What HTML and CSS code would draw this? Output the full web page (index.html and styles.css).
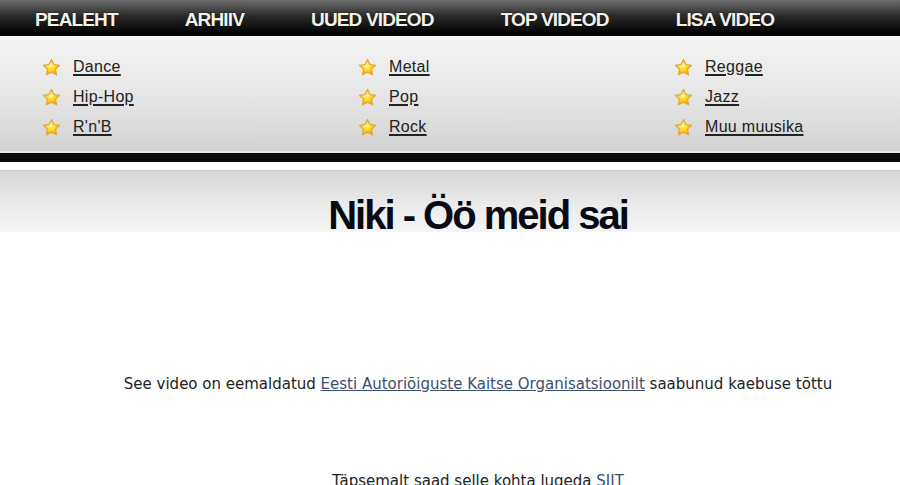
FILE: index.html
```html
<!DOCTYPE html>
<html lang="et">
<head>
  <meta charset="UTF-8" />
  <title>Niki - Öö meid sai</title>
  <link rel="stylesheet" href="styles.css">
</head>
<body>
  <!-- Ülemine menüü -->
  <nav class="topnav">
    <a href="#">PEALEHT</a>
    <a href="#">ARHIIV</a>
    <a href="#">UUED VIDEOD</a>
    <a href="#">TOP VIDEOD</a>
    <a href="#">LISA VIDEO</a>
  </nav>

  <!-- Žanrid -->
  <div class="genres">
    <ul class="genre-col">
      <li><span class="star"></span><a href="#">Dance</a></li>
      <li><span class="star"></span><a href="#">Hip-Hop</a></li>
      <li><span class="star"></span><a href="#">R'n'B</a></li>
    </ul>
    <ul class="genre-col">
      <li><span class="star"></span><a href="#">Metal</a></li>
      <li><span class="star"></span><a href="#">Pop</a></li>
      <li><span class="star"></span><a href="#">Rock</a></li>
    </ul>
    <ul class="genre-col">
      <li><span class="star"></span><a href="#">Reggae</a></li>
      <li><span class="star"></span><a href="#">Jazz</a></li>
      <li><span class="star"></span><a href="#">Muu muusika</a></li>
    </ul>
  </div>
  <div class="black-band"></div>

  <!-- Video pealkiri -->
  <div class="title-band">
    <h1>Niki - Öö meid sai</h1>
  </div>

  <div class="content">
    <p class="notice">See video on eemaldatud <a href="#">Eesti Autoriõiguste Kaitse Organisatsioonilt</a> saabunud kaebuse tõttu</p>
    <p class="more">Täpsemalt saad selle kohta lugeda <a href="#">SIIT</a></p>
  </div>

  <svg width="0" height="0" class="defs">
    <defs>
      <radialGradient id="starfill" cx="45%" cy="40%" r="65%">
        <stop offset="0" stop-color="#fff6a0"/>
        <stop offset="0.5" stop-color="#ffd21a"/>
        <stop offset="1" stop-color="#f0a000"/>
      </radialGradient>
    </defs>
  </svg>

  <script>
    // tähed lisatakse skriptiga, et HTML jääks lühikeseks
    var starSvg = '<svg viewBox="0 0 20 20" width="19" height="19"><path d="M10 1.5l2.6 5.4 5.9.8-4.3 4.1 1.1 5.9L10 14.9l-5.3 2.8 1.1-5.9L1.5 7.7l5.9-.8z" fill="url(#starfill)" stroke="#e2a33a" stroke-width="1.2" stroke-linejoin="round"/></svg>';
    document.querySelectorAll('.star').forEach(function (el) {
      el.innerHTML = starSvg;
    });
  </script>
</body>
</html>
```

FILE: styles.css
```css
/* Üldine */
* {
  box-sizing: border-box;
  margin: 0;
  padding: 0;
}

body {
  background: #fff;
  font-family: 'Liberation Sans', Arial, sans-serif;
  color: #222;
  width: 900px;
  height: 485px;
  overflow: hidden;
}

/* Ülemine menüü */
.topnav {
  height: 38px;
  display: flex;
  align-items: center;
  gap: 67px;
  padding-left: 35px;
  padding-top: 3px;
  background: linear-gradient(to bottom, #6e6e6e 0%, #2a2a2a 45%, #000 95%);
  border-bottom: 2px solid #f4f4f4;
}

.topnav a {
  color: #f2f1ea;
  text-decoration: none;
  font-weight: bold;
  font-size: 19px;
  letter-spacing: -0.85px;
  text-shadow: 0 0 2px rgba(0, 0, 0, 0.6);
}

/* Žanrid */
.genres {
  display: flex;
  padding: 14px 0 8px 42px;
  height: 113px;
  background: linear-gradient(to bottom, #f3f3f3 0%, #e6e6e6 50%, #d3d3d3 100%);
}

.genre-col {
  list-style: none;
  width: 316px;
  flex-shrink: 0;
}

.genre-col:last-child {
  width: auto;
  flex: 1;
}

.genre-col li {
  height: 30px;
  display: flex;
  align-items: center;
}

.star {
  width: 19px;
  height: 19px;
  margin-right: 12px;
  display: flex;
}

.genre-col a {
  color: #222;
  font-size: 16px;
  letter-spacing: 0.3px;
  text-decoration-thickness: 1.5px;
  text-underline-offset: 2px;
}

.black-band {
  height: 11px;
  background: #0b0b0b;
  border-top: 2px solid #e8e8e8;
}

/* Video pealkiri */
.title-band {
  margin-top: 8px;
  height: 62px;
  border-top: 1px solid #c9c9c9;
  background: linear-gradient(to bottom, #d6d6d6 0%, #ececec 60%, #f5f5f5 100%);
  text-align: center;
  padding-left: 56px;
}

.title-band h1 {
  font-size: 40px;
  letter-spacing: -2px;
  line-height: 40px;
  padding-top: 24px;
  color: #0a0a14;
  white-space: nowrap;
}

.content {
  padding-left: 56px;
  text-align: center;
  font-family: 'DejaVu Sans', Verdana, sans-serif;
  font-size: 15px;
  color: #222;
}

.notice {
  margin-top: 143px;
}

.more {
  margin-top: 79px;
}

.content a {
  color: #3d4f6e;
}

.defs {
  position: absolute;
}
```
